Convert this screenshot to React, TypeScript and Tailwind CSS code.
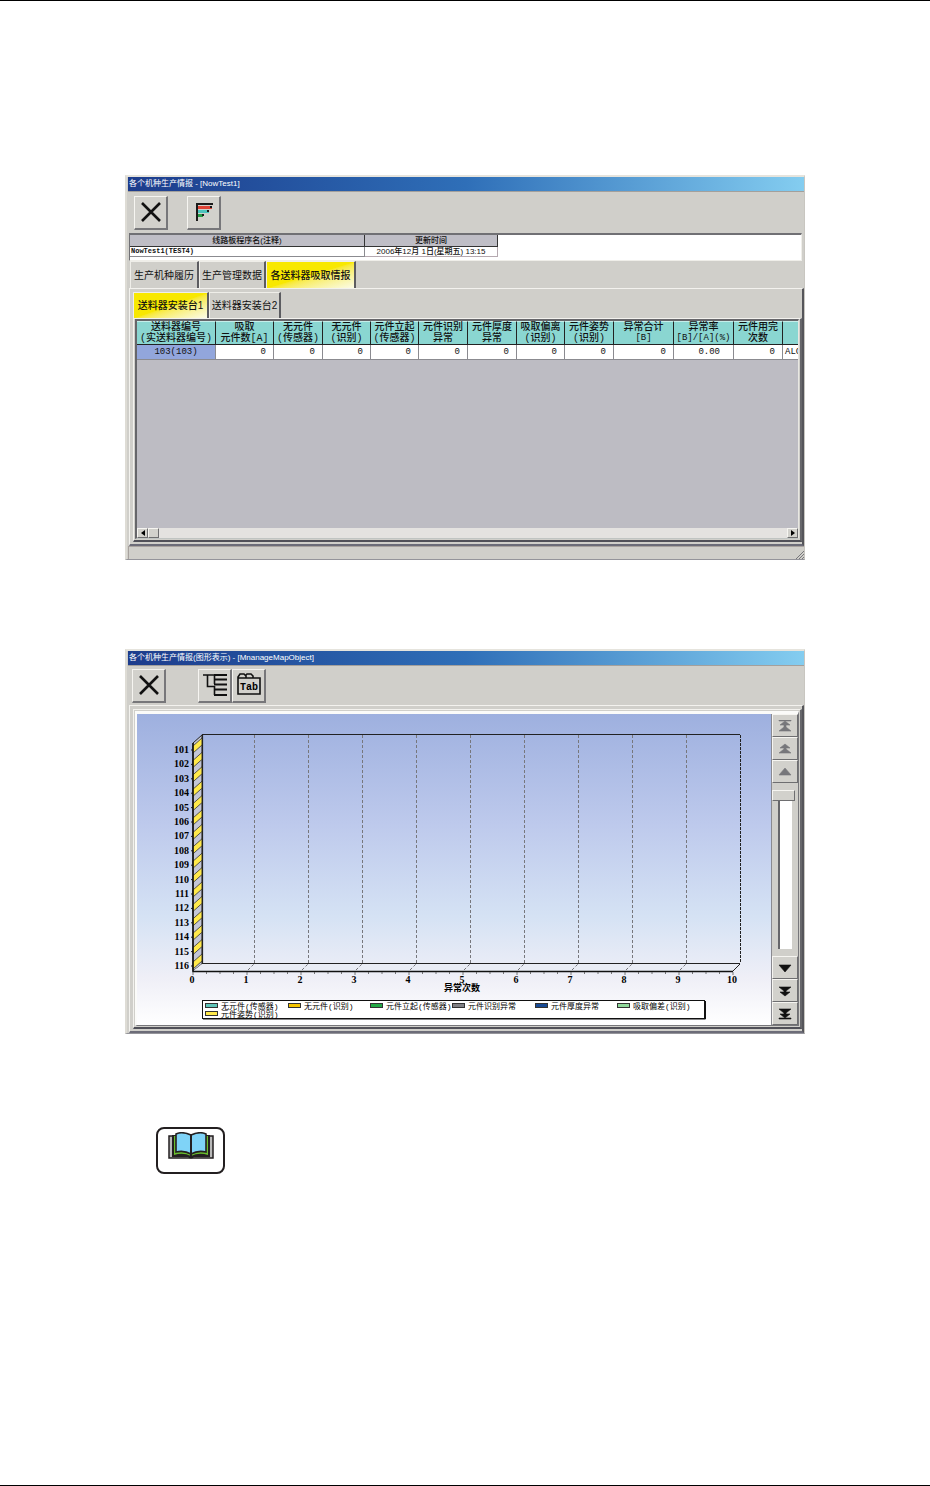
import { ReactNode } from "react";

interface Column {
  lines: string[];
  width: string;
  value: string;
}

const columns: Column[] = [
  { lines: ["送料器编号", "(实送料器编号)"], width: "w-[79px]", value: "103(103)" },
  { lines: ["吸取", "元件数[A]"], width: "w-[58px]", value: "0" },
  { lines: ["无元件", "(传感器)"], width: "w-[49px]", value: "0" },
  { lines: ["无元件", "(识别)"], width: "w-[48px]", value: "0" },
  { lines: ["元件立起", "(传感器)"], width: "w-[48px]", value: "0" },
  { lines: ["元件识别", "异常"], width: "w-[49px]", value: "0" },
  { lines: ["元件厚度", "异常"], width: "w-[49px]", value: "0" },
  { lines: ["吸取偏离", "(识别)"], width: "w-[48px]", value: "0" },
  { lines: ["元件姿势", "(识别)"], width: "w-[49px]", value: "0" },
  { lines: ["异常合计", "[B]"], width: "w-[60px]", value: "0" },
  { lines: ["异常率", "[B]/[A](%)"], width: "w-[60px]", value: "0.00" },
  { lines: ["元件用完", "次数"], width: "w-[49px]", value: "0" },
];

const legend = [
  { label: "无元件(传感器)", color: "#5fc4b8", x: 68, y: 289 },
  { label: "无元件(识别)", color: "#f5c400", x: 151, y: 289 },
  { label: "元件立起(传感器)", color: "#22a845", x: 233, y: 289 },
  { label: "元件识别异常", color: "#808084", x: 315, y: 289 },
  { label: "元件厚度异常", color: "#174a94", x: 398, y: 289 },
  { label: "吸取偏差(识别)", color: "#8fd89a", x: 480, y: 289 },
  { label: "元件姿势(识别)", color: "#ffe94a", x: 68, y: 297 },
];

const raised = "border border-t-[#f6f5f1] border-l-[#f6f5f1] border-r-[#6e6e70] border-b-[#6e6e70]";

function Window({ title, children }: { title: string; children: ReactNode }) {
  return (
    <section className="border-t-2 border-r border-b border-l-2 border-t-[#e6e4dd] border-r-[#c8c6c0] border-b-[#94949a] border-l-[#dedcd5] bg-[#d0cfca] pl-px">
      <h2 className="flex h-[15px] items-center overflow-hidden border-b border-[#a3a09c] bg-linear-to-r from-[#1d3c8c] via-[#2f6fb8] to-[#84cdf0] pl-px text-[8px] leading-[14px] whitespace-pre text-white">
        {title}
      </h2>
      {children}
    </section>
  );
}

function ToolButton({ label, children }: { label: string; children: ReactNode }) {
  return (
    <button
      type="button"
      aria-label={label}
      className="flex size-[34px] items-center justify-center border-t border-r-2 border-b-2 border-l border-t-[#f6f5f1] border-r-[#77777a] border-b-[#77777a] border-l-[#f6f5f1] bg-[#d2d1cc]"
    >
      {children}
    </button>
  );
}

function Tab({ active, width, children }: { active?: boolean; width: string; children: ReactNode }) {
  return (
    <button
      type="button"
      role="tab"
      aria-selected={!!active}
      className={`${width} h-full border-t border-r-2 border-l border-t-[#efeee9] border-r-[#5c5c60] border-l-[#efeee9] text-center text-[10px] whitespace-nowrap ${
        active ? "bg-linear-to-br from-[#f8e800] from-50% to-[#fbfbe6] font-medium" : "bg-[#d0cfca]"
      }`}
    >
      {children}
    </button>
  );
}

/** Bevelled double frame that holds the tab pages and the chart. */
function Panel({ tabs, children }: { tabs?: ReactNode; children: ReactNode }) {
  return (
    <div className="ml-px border-t border-r-2 border-b-2 border-l border-t-[#f3f2ee] border-r-[#55555a] border-b-[#6c6c78] border-l-[#f3f2ee] pt-[3px] pb-[2px] pl-[3px]">
      {tabs}
      <div className="border-t border-r-2 border-b-2 border-l border-t-[#f3f2ee] border-r-[#66666a] border-b-[#505058] border-l-[#f3f2ee] pr-px pb-px pl-px">
        {children}
      </div>
    </div>
  );
}

function CloseIcon() {
  return (
    <svg viewBox="0 0 20 20" className="size-5" fill="none" stroke="#111" strokeWidth="2.6">
      <path d="M1 1L19 19M19 1L1 19" />
    </svg>
  );
}

function ChartIcon() {
  return (
    <svg viewBox="0 0 20 20" className="size-5">
      <path d="M2 1h17v2H4v16H2z" fill="#1a1a1a" />
      <path d="M4 4h14v3H4z" fill="#df4336" />
      <path d="M4 8h11v3H4z" fill="#4cc4bd" />
      <path d="M4 12h5v3H4z" fill="#239c43" />
      <path d="M16 4h2v2h-2zM13 8h2v2h-2zM8 12h2v2H8z" fill="#1a1a1a" />
    </svg>
  );
}

function TreeIcon() {
  return (
    <svg viewBox="0 0 26 26" className="size-[26px]" fill="none" stroke="#111">
      <path d="M12 3h13M12 7.5h13M12 12.5h13M12 17.5h13M12 23h13" strokeWidth="2" />
      <path d="M1 3h12M5.5 3v11.5h7M12.5 3v9M12.5 14v9" strokeWidth="1.6" />
    </svg>
  );
}

function FolderIcon() {
  return (
    <svg viewBox="0 0 26 26" className="size-[26px]">
      <path
        d="M2 22V5l2-3h4l2 2v2h14v16zM2 6h9M10 3l1-1h4l2 2v2"
        fill="none"
        stroke="#111"
        strokeWidth="1.6"
      />
      <text x="13" y="18" textAnchor="middle" fontSize="10" fontWeight="700" className="font-['Liberation_Mono',monospace]">
        Tab
      </text>
    </svg>
  );
}

function BookIcon() {
  return (
    <svg viewBox="0 0 46 28" className="h-[28px] w-[46px]">
      <path d="M1 4h44v22H1z" fill="#b9b9b9" stroke="#231f20" strokeWidth="1.5" />
      <path d="M4 3h38v22H26q-3 3-6 0H4z" fill="#231f20" />
      <path d="M6 4h34v19q-9-3-17 1-8-4-17-1z" fill="#6abf2e" />
      <path
        d="M23 3Q14-1 8 2v18q8-2 15 2 7-4 15-2V2q-6-3-15 1z"
        fill="#7fd3f7"
        stroke="#231f20"
        strokeWidth="1.6"
      />
      <path d="M23 3v22" stroke="#231f20" strokeWidth="2" />
    </svg>
  );
}

const arrowPaths = {
  first: "M2 0h12v1H2zM8 1l5 4H9v2l5 4H2l5-4V5H3z",
  pageUp: "M8 1l5 4H9v1l5 4H2l5-4V5H3z",
  up: "M8 2l6 7H2z",
  down: "M8 10L2 3h12z",
  pageDown: "M8 11L3 7h4V6L2 2h12L9 6v1h4z",
  last: "M8 10L3 6h4V5L2 1h12L9 5v1h4zM2 10h12v1H2z",
};

function ScrollButton({ kind, label, disabled }: { kind: keyof typeof arrowPaths; label: string; disabled?: boolean }) {
  return (
    <button
      type="button"
      aria-label={label}
      disabled={disabled}
      className={`flex h-[23px] w-full items-center justify-center bg-[#d2d1cc] ${raised}`}
    >
      <svg
        viewBox="0 0 16 12"
        className={disabled ? "h-3 w-4 fill-[#77777b] stroke-[#77777b]" : "h-3 w-4 fill-[#111] stroke-[#111]"}
      >
        <path d={arrowPaths[kind]} strokeWidth="0.6" />
      </svg>
    </button>
  );
}

function FeederTable() {
  return (
    <table className="w-full table-fixed border-separate border-spacing-0 font-['Liberation_Mono','Noto_Sans_CJK_SC',monospace]">
      <thead>
        <tr className="h-[24px] bg-[#8ad6d1]">
          {columns.map((col) => (
            <th
              key={col.lines.join()}
              className={`${col.width} border-t border-r border-b border-t-[#c5eeea] border-r-[#222] border-b-[#222] p-0 text-center text-[10px] leading-[11px] font-medium whitespace-nowrap`}
            >
              {col.lines.map((line) => (
                <span key={line} className={line.startsWith("[") ? "block text-[9px]" : "block"}>
                  {line}
                </span>
              ))}
            </th>
          ))}
          <th className="border-t border-b border-t-[#c5eeea] border-b-[#222] p-0" aria-label="元件名" />
        </tr>
      </thead>
      <tbody>
        <tr className="h-[15px] bg-white text-[9px] leading-[14px]">
          {columns.map((col, i) => (
            <td
              key={col.lines.join()}
              className={`border-r border-b border-[#8b8b90] py-0 ${
                i === 0 ? "bg-[#92a6dc] text-center" : col.value === "0.00" ? "pr-[13px] text-right" : "pr-[7px] text-right"
              }`}
            >
              {col.value}
            </td>
          ))}
          <td className="overflow-hidden border-b border-[#8b8b90] py-0 pl-[2px] whitespace-nowrap">ALC</td>
        </tr>
      </tbody>
    </table>
  );
}

function ErrorChart() {
  const rows = Array.from({ length: 16 }, (_, i) => i);
  const ticks = Array.from({ length: 11 }, (_, i) => i);
  return (
    <svg viewBox="0 0 634 311" className="block h-auto w-full font-['Liberation_Serif','Noto_Sans_CJK_SC',serif]">
      <defs>
        <linearGradient id="sky" x1="0" y1="0" x2="0" y2="1">
          <stop offset="0" stopColor="#9eb0df" />
          <stop offset="0.35" stopColor="#bdc9ec" />
          <stop offset="0.65" stopColor="#d5e2f4" />
          <stop offset="0.85" stopColor="#efeff7" />
          <stop offset="1" stopColor="#ffffff" />
        </linearGradient>
      </defs>
      <rect width="634" height="311" fill="url(#sky)" />

      {/* left wall with one stripe per feeder */}
      <path d="M56 29L65 21V250L56 257z" fill="#c3c6d6" stroke="#222" />
      {rows.map((i) => (
        <g key={i} transform={`translate(0 ${i * 14.4})`}>
          <path d="M56 32L65 24V31L56 39z" fill="#ffe94a" stroke="#333" strokeWidth="0.8" />
          <path d="M54 36h2" stroke="#222" />
          <text x="52" y="39" textAnchor="end" fontSize="10" fontWeight="700">
            {101 + i}
          </text>
        </g>
      ))}

      {/* floor */}
      <path d="M56 257L65 250H603L596 257z" fill="#e9ecf5" />
      {ticks.slice(1, 10).map((i) => (
        <g key={i} stroke="#77777c">
          <path d={`M${63.5 + i * 54} 21V249`} strokeDasharray="3 2" />
          <path d={`M${57 + i * 54} 256l6 -6`} strokeDasharray="3 2" />
        </g>
      ))}
      <path d="M65.5 250V20.5H603M65 249.5H603" fill="none" stroke="#222" strokeWidth="1.2" />
      <path d="M603.5 21V249" stroke="#222" strokeDasharray="3 1" />
      <path d="M603 250L596 257" stroke="#222" />
      <path d="M56 29V257.5H596" fill="none" stroke="#111" strokeWidth="1.6" />
      {Array.from({ length: 41 }, (_, i) => (
        <path key={i} d={`M${56 + i * 13.5} 258v${i % 4 ? 2 : 3}`} stroke="#555" strokeWidth="0.8" />
      ))}
      {ticks.map((i) => (
        <text key={i} x={55 + i * 54} y="269" textAnchor="middle" fontSize="10" fontWeight="700">
          {i}
        </text>
      ))}
      <text x="325" y="277" textAnchor="middle" fontSize="9" fontWeight="700">
        异常次数
      </text>

      {/* legend */}
      <rect x="65.5" y="286.5" width="502" height="18" fill="#fff" stroke="#111" />
      <path d="M66 305h502.5V287" fill="none" stroke="#111" />
      {legend.map((item) => (
        <g key={item.label}>
          <rect x={item.x + 0.5} y={item.y + 0.5} width="12" height="4" fill={item.color} stroke="#333" />
          <text x={item.x + 16} y={item.y + 6} fontSize="8" className="font-['Liberation_Mono','Noto_Sans_CJK_SC',monospace]">
            {item.label}
          </text>
        </g>
      ))}
    </svg>
  );
}

function FeederWindow() {
  return (
    <Window title="各个机种生产情报 - [NowTest1]">
      <div className="flex h-[41px] items-center gap-[19px] pl-[6px]">
        <ToolButton label="关闭">
          <CloseIcon />
        </ToolButton>
        <ToolButton label="图形表示">
          <ChartIcon />
        </ToolButton>
      </div>

      <div className="mr-[2px] ml-px h-[28px] border-t-2 border-r border-b border-l border-t-[#707074] border-r-[#efeee9] border-b-[#efeee9] border-l-[#707074] bg-white">
        <table className="table-fixed border-separate border-spacing-0 text-[8px] leading-[10px]">
          <thead>
            <tr className="h-[12px] bg-[#bfbec6]">
              <th className="w-[235px] border-r border-b border-[#333] p-0 text-center font-medium">线路板程序名(注释)</th>
              <th className="w-[133px] border-r border-b border-[#333] p-0 text-center font-medium">更新时间</th>
            </tr>
          </thead>
          <tbody>
            <tr className="h-[10px]">
              <td className="border-r border-b border-[#8b8b90] p-0 pl-px font-['Liberation_Mono',monospace] text-[7px] leading-[9px] font-bold">
                NowTest1(TEST4)
              </td>
              <td className="border-r border-b border-[#b5a9b0] p-0 text-center leading-[9px] font-medium">
                2006年12月 1日(星期五) 13:15
              </td>
            </tr>
          </tbody>
        </table>
      </div>

      <div role="tablist" className="ml-[2px] flex h-[27px]">
        <Tab width="w-[69px]">生产机种履历</Tab>
        <Tab width="w-[67px]">生产管理数据</Tab>
        <Tab width="w-[90px]" active>
          各送料器吸取情报
        </Tab>
      </div>

      <Panel
        tabs={
          <div role="tablist" className="flex h-[26px]">
            <Tab width="w-[76px]" active>
              送料器安装台1
            </Tab>
            <Tab width="w-[72px]">送料器安装台2</Tab>
          </div>
        }
      >
        <div className="overflow-hidden border-t-2 border-r border-b border-l-2 border-t-[#66666a] border-r-[#e8e7e2] border-b-[#c0c4c2] border-l-[#66666a] bg-[#bdbcc3]">
          <FeederTable />
          <div className="h-[168px]" />
          <div className="flex h-[10px] bg-[#e4e2e0]">
            <button type="button" aria-label="向左" className={`flex w-[11px] items-center justify-center bg-[#d2d1cc] ${raised}`}>
              <svg viewBox="0 0 4 6" className="h-[6px] w-1">
                <path d="M4 0L0 3l4 3z" />
              </svg>
            </button>
            <div className={`w-[11px] bg-[#d2d1cc] ${raised}`} />
            <button type="button" aria-label="向右" className={`ml-auto flex w-[11px] items-center justify-center bg-[#d2d1cc] ${raised}`}>
              <svg viewBox="0 0 4 6" className="h-[6px] w-1">
                <path d="M0 0l4 3-4 3z" />
              </svg>
            </button>
          </div>
        </div>
      </Panel>

      <footer className="flex h-[13px] items-end justify-end border-t border-l border-[#a8a29e]">
        <svg viewBox="0 0 8 8" className="size-2" stroke="#77777b">
          <path d="M0 8L8 0M3 8L8 3M6 8L8 6" />
        </svg>
      </footer>
    </Window>
  );
}

function ChartWindow() {
  return (
    <Window title="各个机种生产情报(图形表示) - [MnanageMapObject]">
      <div className="flex h-[39px] items-center pl-1">
        <ToolButton label="关闭">
          <CloseIcon />
        </ToolButton>
        <div className="ml-8 flex">
          <ToolButton label="一览">
            <TreeIcon />
          </ToolButton>
          <ToolButton label="Tab">
            <FolderIcon />
          </ToolButton>
        </div>
      </div>

      <Panel>
        <div className="mt-px flex border-t-3 border-r border-b border-l-2 border-t-[#fbfbf9] border-r-[#77777b] border-b-[#77777b] border-l-[#fbfbf9]">
          <div className="min-w-0 flex-1">
            <ErrorChart />
          </div>
          <div className="flex w-[27px] flex-col border-l border-[#8a8a90] bg-[#d0cfca]">
            <ScrollButton kind="first" label="最前" disabled />
            <ScrollButton kind="pageUp" label="上一页" disabled />
            <ScrollButton kind="up" label="向上" disabled />
            {/* size containment keeps the slider from stretching the row past the chart */}
            <div className="flex flex-1 justify-center py-[7px] contain-size">
              <input
                type="range"
                aria-label="滚动位置"
                min={0}
                max={100}
                defaultValue={0}
                className="h-full w-[14px] appearance-none border-l-2 border-[#66666a] bg-white [writing-mode:vertical-lr] [&::-webkit-slider-thumb]:-ml-[5px] [&::-webkit-slider-thumb]:h-[11px] [&::-webkit-slider-thumb]:w-[23px] [&::-webkit-slider-thumb]:appearance-none [&::-webkit-slider-thumb]:border [&::-webkit-slider-thumb]:border-t-[#f6f5f1] [&::-webkit-slider-thumb]:border-r-[#6e6e70] [&::-webkit-slider-thumb]:border-b-[#6e6e70] [&::-webkit-slider-thumb]:border-l-[#f6f5f1] [&::-webkit-slider-thumb]:bg-[#d2d1cc]"
              />
            </div>
            <ScrollButton kind="down" label="向下" />
            <ScrollButton kind="pageDown" label="下一页" />
            <ScrollButton kind="last" label="最后" />
          </div>
        </div>
      </Panel>
    </Window>
  );
}

export default function App() {
  return (
    <main
      lang="zh-CN"
      className="min-h-screen border-y border-black bg-white px-[125px] pt-[174px] font-['Liberation_Sans','Noto_Sans_CJK_SC',sans-serif] text-[#111]"
    >
      <FeederWindow />
      <div className="mt-[89px]">
        <ChartWindow />
      </div>
      <div className="mt-[93px] ml-[31px] flex h-[47px] w-[69px] items-start justify-center rounded-lg border-2 border-[#231f20] pt-[3px]">
        <BookIcon />
      </div>
    </main>
  );
}
